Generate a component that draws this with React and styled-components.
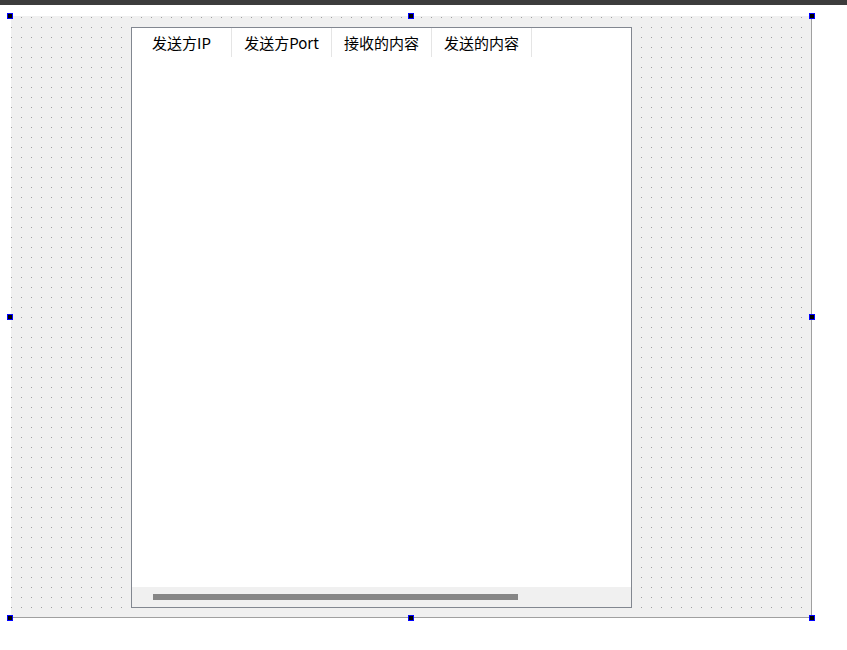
import React from 'react'
import styled, { createGlobalStyle } from 'styled-components';

const GlobalStyle = createGlobalStyle`
  html, body {
    margin: 0;
    padding: 0;
    background: #ffffff;
    font-family: "Noto Sans CJK SC", "Noto Sans", sans-serif;
  }
`;

const Page = styled.div`
  width: 847px;
  height: 650px;
  display: flex;
  flex-direction: column;
  background: #ffffff;
`;

const TopBar = styled.div`
  height: 5px;
  background: #3c3c3c;
`;

const Form = styled.div`
  position: relative;
  box-sizing: border-box;
  width: 801px;
  height: 602px;
  margin: 11px 0 0 11px;
  padding: 11px 0 0 120px;
  border-right: 1px solid #a0a0a0;
  border-bottom: 1px solid #a0a0a0;
  background-color: #f0f0f0;
  /* designer grid dots, 10px apart */
  background-image:
    linear-gradient(90deg, #f0f0f0 9px, transparent 9px),
    linear-gradient(#f0f0f0 9px, #a0a0a0 9px);
  background-size: 10px 10px;
  background-position: 1px 2px;
`;

const Handle = styled.div`
  position: absolute;
  left: ${props => props.x}px;
  top: ${props => props.y}px;
  width: 4px;
  height: 4px;
  background: #000000;
  border: 1px solid #0000ff;
`;

const Table = styled.div`
  box-sizing: border-box;
  width: 501px;
  height: 581px;
  border: 1px solid #828790;
  background: #ffffff;
  display: flex;
  flex-direction: column;
`;

const Header = styled.div`
  display: flex;
  height: 29px;
  flex-shrink: 0;
`;

const HeaderCell = styled.div`
  box-sizing: border-box;
  width: ${props => props.width || 100}px;
  height: 29px;
  padding-bottom: 1px;
  border-right: 1px solid #e5e5e5;
  display: flex;
  align-items: center;
  justify-content: center;
  font-size: 15px;
  color: #000000;
  white-space: nowrap;
`;

const Body = styled.div`
  flex: 1;
  background: #ffffff;
`;

const ScrollBar = styled.div`
  box-sizing: border-box;
  height: 20px;
  flex-shrink: 0;
  background: #f0f0f0;
  padding: 7px 0 0 21px;
`;

const ScrollHandle = styled.div`
  width: 365px;
  height: 6px;
  background: #868686;
`;

const columns = ['发送方IP', '发送方Port', '接收的内容', '发送的内容'];

const handles = [
  [-4, -3], [397, -3], [798, -3],
  [-4, 298], [798, 298],
  [-4, 599], [397, 599], [798, 599],
];

const App = () => {
  return (
    <Page>
      <GlobalStyle />
      <TopBar />
      <Form>
        <Table>
          <Header>
            {columns.map((c, i) => (
              <HeaderCell key={i}>{c}</HeaderCell>
            ))}
          </Header>
          <Body />
          <ScrollBar>
            <ScrollHandle />
          </ScrollBar>
        </Table>
        {handles.map(([x, y], i) => (
          <Handle key={i} x={x} y={y} />
        ))}
      </Form>
    </Page>
  )
}

export default App
